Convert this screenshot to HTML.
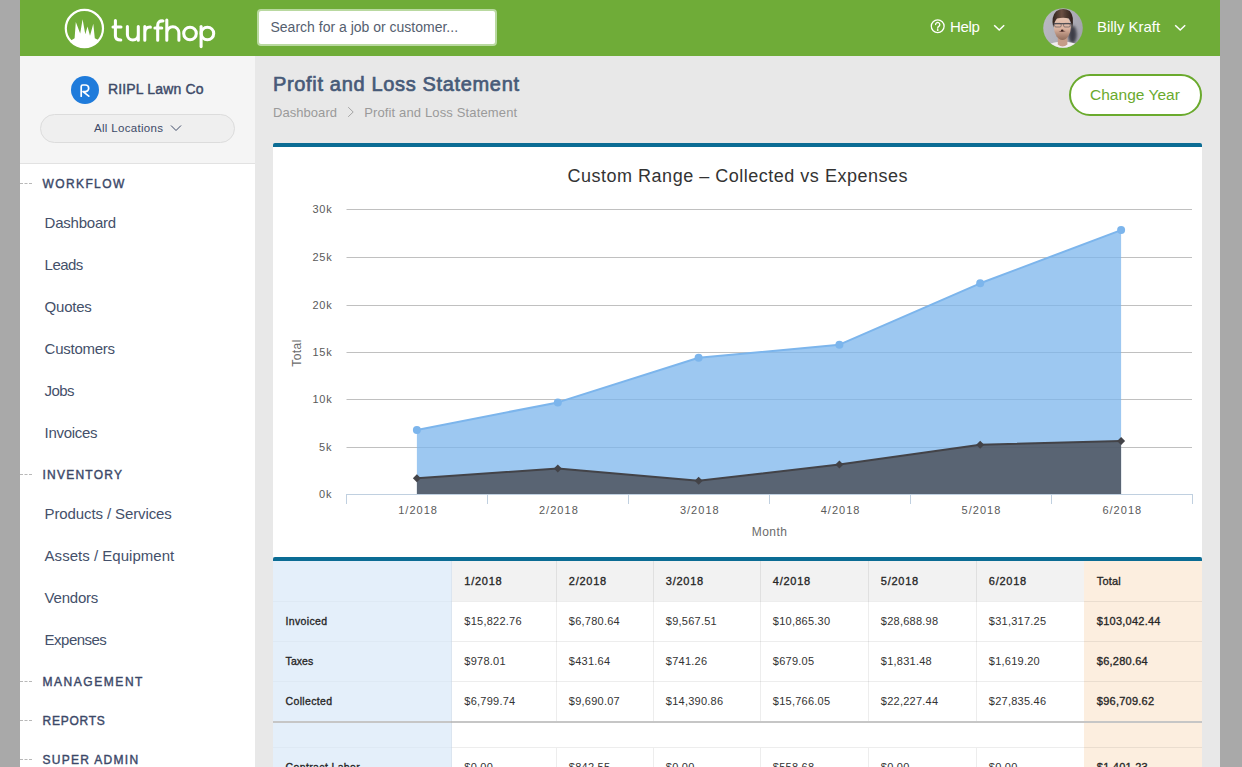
<!DOCTYPE html>
<html>
<head>
<meta charset="utf-8">
<title>Profit and Loss Statement</title>
<style>
*{box-sizing:border-box;margin:0;padding:0}
html,body{width:1242px;height:767px;overflow:hidden}
body{background:#a9a9a9;font-family:"Liberation Sans",sans-serif;position:relative}
.abs{position:absolute;white-space:nowrap;line-height:1}
#wrap{position:absolute;left:20px;top:0;width:1200px;height:767px;background:#e8e8e8;overflow:hidden}
/* header */
#hdr{position:absolute;left:0;top:0;width:1200px;height:56px;background:#6fac38}
#search{position:absolute;left:237px;top:9px;width:240px;height:37px;background:#fff;border:2px solid #b9d9a0;border-radius:4px}
#searchtx{left:250.5px;top:20px;font-size:14px;color:#55606f}
/* sidebar */
#side{position:absolute;left:0;top:56px;width:235px;height:711px;background:#fff}
#sidetop{position:absolute;left:0;top:0;width:235px;height:108px;background:#f5f5f5;border-bottom:1px solid #e2e2e2}
#loc{position:absolute;left:20px;top:58px;width:195px;height:28.5px;border:1px solid #dcdcdc;border-radius:15px;background:#efefef}
.sec{font-weight:normal;-webkit-text-stroke:.4px #3b4868;font-size:12px;letter-spacing:1.2px;color:#3b4868}
.nav{font-size:15px;color:#44506a}
.dash{position:absolute;left:0;width:12px;height:0;border-top:1px dashed #b8b8b8}
/* main */
#title{left:253px;top:74px;font-size:20px;font-weight:normal;-webkit-text-stroke:.68px #475a78;color:#475a78}
.bc{font-size:13px;color:#9a9a9a}
#btn{position:absolute;left:1049px;top:74px;width:133px;height:42px;border:2px solid #6aaa2d;border-radius:21px;background:#fff}
#btntx{left:1070px;top:87.4px;font-size:15.5px;color:#6aaa2d}
.panel{position:absolute;left:253px;width:929px;background:#fff;border-top:4px solid #0b6c94;border-radius:2px 2px 0 0}
.yl{font-size:11px;color:#5a5a5a;letter-spacing:.7px}
.xl{font-size:11px;color:#5a5a5a;letter-spacing:1px}
.th{font-size:11px;-webkit-text-stroke:.32px #262626;color:#262626}
.td{font-size:11px;color:#333;letter-spacing:.25px}
.tt{font-size:11px;-webkit-text-stroke:.32px #262626;color:#262626;letter-spacing:.25px}
#p1{top:143px;height:414px}
#p2{top:557px;height:210px}
</style>
<style id="fit">
#s1{letter-spacing:1.39px}
#s2{letter-spacing:1.24px}
#s3{letter-spacing:1.55px}
#s4{letter-spacing:0.75px}
#s5{letter-spacing:1.29px}
#n0{letter-spacing:-0.22px}
#n1{letter-spacing:-0.54px}
#n2{letter-spacing:-0.22px}
#n3{letter-spacing:-0.25px}
#n4{letter-spacing:-0.63px}
#n5{letter-spacing:-0.3px}
#n6{letter-spacing:-0.11px}
#n7{letter-spacing:0.02px}
#n8{letter-spacing:-0.22px}
#n9{letter-spacing:-0.52px}
#co{letter-spacing:0.15px}
#loctx{letter-spacing:0.31px}
#title{letter-spacing:0.66px}
#btntx{letter-spacing:0.02px}
#help{letter-spacing:-0.35px}
#uname{letter-spacing:-0.03px}
#ctitle{letter-spacing:0.51px}
#xs0{letter-spacing:1.03px}
#xs1{letter-spacing:1.03px}
#xs2{letter-spacing:1.03px}
#xs3{letter-spacing:1.03px}
#xs4{letter-spacing:1.03px}
#xs5{letter-spacing:1.03px}
#months{letter-spacing:0.51px}
#bc1{letter-spacing:0.05px}
#bc2{letter-spacing:0.14px}
#y0{letter-spacing:0.88px}
#y1{letter-spacing:0.88px}
#y2{letter-spacing:0.72px}
#y3{letter-spacing:0.72px}
#y4{letter-spacing:0.72px}
#y5{letter-spacing:0.72px}
#y6{letter-spacing:0.72px}
#h0{letter-spacing:0.73px}
#h1{letter-spacing:0.73px}
#h2{letter-spacing:0.73px}
#h3{letter-spacing:0.73px}
#h4{letter-spacing:0.73px}
#h5{letter-spacing:0.73px}
#h6{letter-spacing:0.16px}
#r0{letter-spacing:0.33px}
#r1{letter-spacing:0.04px}
#r2{letter-spacing:0.34px}
#r3{letter-spacing:0.36px}
</style>
</head>
<body>
<div id="wrap">
  <div id="hdr">
    <svg class="abs" style="left:0;top:0" width="240" height="56" viewBox="20 0 240 56">
      <defs><clipPath id="lc"><circle cx="84.4" cy="28.5" r="18.6"/></clipPath></defs>
      <g clip-path="url(#lc)" fill="#fff">
        <path d="M60 60V41.5L71.4 40.2L74.6 38.2L75.8 21.9L80.2 33.6L82.6 19.3L85.3 34.3L87.5 26.6L90 35.8L93.3 23.7L94.8 38.2L98.8 40.2L110 41.5V60Z"/>
      </g>
      <circle cx="84.4" cy="28.5" r="18.6" fill="none" stroke="#fff" stroke-width="2.2"/>
      <g fill="none" stroke="#fff" stroke-width="3.05" stroke-linecap="round" stroke-linejoin="round">
        <path d="M115.4 20.6V36Q115.4 40 120.8 40M113 27H121"/>
        <path d="M127.4 26.6V34.5A5.45 5.45 0 0 0 138.3 34.5V26.6M138.3 34V40.2"/>
        <path d="M144.8 26.6V40.2M144.8 32.5Q145 27 150.4 27.1"/>
        <path d="M157.7 40.2V25.2Q157.7 20.6 163 20.9M154.9 28H161.8"/>
        <path d="M166.8 20V40.2M166.8 32.8A6.05 6.05 0 0 1 178.9 32.8V40.2"/>
        <circle cx="190" cy="33.5" r="6.3"/>
        <path d="M201.1 26.6V46.6"/><circle cx="207.4" cy="33.5" r="6.3"/>
      </g>
    </svg>
    <div id="search"></div>
    <div class="abs" id="searchtx">Search for a job or customer...</div>
    <svg class="abs" style="left:909px;top:18px" width="18" height="18" viewBox="0 0 18 18"><circle cx="8.7" cy="8.3" r="6.4" fill="none" stroke="#fff" stroke-width="1.3"/><path d="M6.6 6.6a2.1 2.1 0 1 1 3.2 1.8c-.8.5-1.1.9-1.1 1.8" fill="none" stroke="#fff" stroke-width="1.3" stroke-linecap="round"/><circle cx="8.7" cy="12" r=".9" fill="#fff"/></svg>
    <div class="abs" id="help" style="left:930px;top:19.2px;font-size:15px;color:#fff">Help</div>
    <svg class="abs" style="left:973px;top:24px" width="12" height="8" viewBox="0 0 12 8"><path d="M1.2 1.2l5 4.8 5-4.8" fill="none" stroke="#fff" stroke-width="1.5"/></svg>
    <svg class="abs" style="left:1023px;top:8.3px" width="40" height="40" viewBox="0 0 40 40">
      <defs><clipPath id="av"><circle cx="20" cy="20" r="19.8"/></clipPath>
      <filter id="avb" x="-10%" y="-10%" width="120%" height="120%"><feGaussianBlur stdDeviation="0.6"/></filter>
      <filter id="avs" x="-50%" y="-50%" width="200%" height="200%"><feGaussianBlur stdDeviation="1.5"/></filter>
      <linearGradient id="avbg" x1="0" x2="1" y1="0" y2="0.3"><stop offset="0" stop-color="#bbbbc3"/><stop offset="0.55" stop-color="#b1b1ba"/><stop offset="1" stop-color="#a3a3ad"/></linearGradient>
      <linearGradient id="avf" x1="0" x2="0" y1="0" y2="1"><stop offset="0" stop-color="#e8c8b6"/><stop offset="0.55" stop-color="#dcb4a0"/><stop offset="0.78" stop-color="#b48d7a"/><stop offset="1" stop-color="#8f6b5b"/></linearGradient>
      <linearGradient id="avh" x1="0" x2="1" y1="0" y2="0"><stop offset="0" stop-color="#2e211c"/><stop offset="0.45" stop-color="#6b4f42"/><stop offset="0.7" stop-color="#4a362e"/><stop offset="1" stop-color="#2a1e1a"/></linearGradient></defs>
      <g clip-path="url(#av)">
        <rect x="-3" y="-3" width="46" height="46" fill="url(#avbg)"/>
        <ellipse cx="29.5" cy="26.5" rx="4.2" ry="9" fill="#3c3c46" filter="url(#avs)"/>
        <g filter="url(#avb)">
        <path d="M-2 44L4 38Q8 34.4 14.5 34L24.5 34Q32 34.6 36 38L42 44Z" fill="#f1eeee"/>
        <path d="M14.8 28h9.6v8.5q-4.8 4-9.6 0Z" fill="#c59c88"/>
        <ellipse cx="19.4" cy="19.4" rx="8.4" ry="12.6" fill="url(#avf)"/>
        <path d="M15.6 23.3Q19.2 24.7 22.8 23.1Q19.4 22.1 15.6 23.3Z" fill="#6a4640"/>
        <ellipse cx="19.2" cy="22.3" rx="1.3" ry=".9" fill="#3c2724"/>
        <path d="M10.2 19.5Q7.8 8.5 13.2 3.2Q20 -1.2 26.8 3Q31.8 8.5 29 20.5Q28.4 14 25.8 10.6Q20.5 8.8 14 10.6Q11.4 13.5 10.2 19.5Z" fill="url(#avh)"/>
        <g fill="none" stroke="#4b4b53"><path d="M10.6 15.7H28.2" stroke-width="1.15" stroke="#44444c"/><rect x="11.6" y="15.4" width="6.6" height="3.6" rx="1.3" stroke-width=".6"/><rect x="20.6" y="15.4" width="6.6" height="3.6" rx="1.3" stroke-width=".6"/></g>
        </g>
      </g>
    </svg>
    <div class="abs" id="uname" style="left:1077px;top:18.9px;font-size:15px;color:#fff">Billy Kraft</div>
    <svg class="abs" style="left:1154px;top:24px" width="12" height="8" viewBox="0 0 12 8"><path d="M1.2 1.2l5 4.8 5-4.8" fill="none" stroke="#fff" stroke-width="1.5"/></svg>
  </div>
  <div id="side">
    <div id="sidetop"><div id="loc"></div></div>
    <div style="position:absolute;left:51px;top:20px;width:28px;height:28px;border-radius:14px;background:#1f7bdb"></div>
    <svg class="abs" style="left:51px;top:20px" width="28" height="28" viewBox="0 0 28 28"><path d="M10.2 20.2V10.6a1.6 1.6 0 0 1 1.6-1.6h2.6a3.3 3.3 0 0 1 0 6.6h-2.4l5.8 4.6" fill="none" stroke="#fff" stroke-width="1.7" stroke-linecap="round" stroke-linejoin="round"/></svg>
    <div class="abs" id="co" style="left:88px;top:26.2px;font-size:14px;-webkit-text-stroke:.42px #3d4a68;color:#3d4a68">RIIPL Lawn Co</div>
    <div class="abs" id="loctx" style="left:74px;top:67px;font-size:11.5px;color:#3d4a68">All Locations</div>
    <svg class="abs" style="left:150px;top:68px" width="12" height="8" viewBox="0 0 12 8"><path d="M1 1.5l5 5 5-5" fill="none" stroke="#3d4a68" stroke-width="1"/></svg>
    <div class="dash" style="top:127.2px"></div>
    <div class="abs sec" id="s1" style="left:22.5px;top:121.6px">WORKFLOW</div>
    <div class="dash" style="top:418.2px"></div>
    <div class="abs sec" id="s2" style="left:22.5px;top:412.6px">INVENTORY</div>
    <div class="dash" style="top:625.2px"></div>
    <div class="abs sec" id="s3" style="left:22.5px;top:619.6px">MANAGEMENT</div>
    <div class="dash" style="top:664.2px"></div>
    <div class="abs sec" id="s4" style="left:22.5px;top:658.6px">REPORTS</div>
    <div class="dash" style="top:703.2px"></div>
    <div class="abs sec" id="s5" style="left:22.5px;top:697.6px">SUPER ADMIN</div>
    <div class="abs nav" id="n0" style="left:24.6px;top:159.3px">Dashboard</div>
    <div class="abs nav" id="n1" style="left:24.6px;top:201.3px">Leads</div>
    <div class="abs nav" id="n2" style="left:24.6px;top:243.3px">Quotes</div>
    <div class="abs nav" id="n3" style="left:24.6px;top:285.3px">Customers</div>
    <div class="abs nav" id="n4" style="left:24.6px;top:327.3px">Jobs</div>
    <div class="abs nav" id="n5" style="left:24.6px;top:369.3px">Invoices</div>
    <div class="abs nav" id="n6" style="left:24.6px;top:450.3px">Products / Services</div>
    <div class="abs nav" id="n7" style="left:24.6px;top:492.3px">Assets / Equipment</div>
    <div class="abs nav" id="n8" style="left:24.6px;top:534.3px">Vendors</div>
    <div class="abs nav" id="n9" style="left:24.6px;top:576.3px">Expenses</div>
  </div>
  <div class="abs" id="title">Profit and Loss Statement</div>
  <div class="abs bc" id="bc1" style="left:253px;top:106.0px">Dashboard</div>
  <svg class="abs" style="left:326px;top:106px" width="10" height="12" viewBox="0 0 10 12"><path d="M2.2 1.2l5 4.8-5 4.8" fill="none" stroke="#a5a5a5" stroke-width="1"/></svg>
  <div class="abs bc" id="bc2" style="left:344.2px;top:106.0px">Profit and Loss Statement</div>
  <div id="btn"></div>
  <div class="abs" id="btntx">Change Year</div>
  <div class="panel" id="p1"></div>
  <div class="panel" id="p2"></div>
  <!--CHART-->
  <svg class="abs" style="left:0;top:0" width="1200" height="767" viewBox="20 0 1200 767">
<path d="M346.5 447.5H1192" stroke="#c0c0c0" stroke-width="1"/>
<path d="M346.5 399.5H1192" stroke="#c0c0c0" stroke-width="1"/>
<path d="M346.5 352.5H1192" stroke="#c0c0c0" stroke-width="1"/>
<path d="M346.5 305.5H1192" stroke="#c0c0c0" stroke-width="1"/>
<path d="M346.5 257.5H1192" stroke="#c0c0c0" stroke-width="1"/>
<path d="M346.5 209.5H1192" stroke="#c0c0c0" stroke-width="1"/>
<path d="M416.9 494.5 L416.9 429.9 L557.8 402.4 L698.6 357.8 L839.4 344.7 L980.2 283.3 L1121.1 230.1 L1121.1 494.5Z" fill="#7cb5ec" fill-opacity="0.75"/>
<path d="M416.9 429.9 L557.8 402.4 L698.6 357.8 L839.4 344.7 L980.2 283.3 L1121.1 230.1" fill="none" stroke="#7cb5ec" stroke-width="2" stroke-linejoin="round" stroke-linecap="round"/>
<circle cx="416.9" cy="429.9" r="4" fill="#7cb5ec"/>
<circle cx="557.8" cy="402.4" r="4" fill="#7cb5ec"/>
<circle cx="698.6" cy="357.8" r="4" fill="#7cb5ec"/>
<circle cx="839.4" cy="344.7" r="4" fill="#7cb5ec"/>
<circle cx="980.2" cy="283.3" r="4" fill="#7cb5ec"/>
<circle cx="1121.1" cy="230.1" r="4" fill="#7cb5ec"/>
<path d="M416.9 494.5 L416.9 478.2 L557.8 468.6 L698.6 480.7 L839.4 464.5 L980.2 444.7 L1121.1 441.1 L1121.1 494.5Z" fill="#434348" fill-opacity="0.75"/>
<path d="M416.9 478.2 L557.8 468.6 L698.6 480.7 L839.4 464.5 L980.2 444.7 L1121.1 441.1" fill="none" stroke="#434348" stroke-width="2" stroke-linejoin="round" stroke-linecap="round"/>
<path d="M416.9 474.2l4 4-4 4-4-4Z" fill="#434348"/>
<path d="M557.8 464.6l4 4-4 4-4-4Z" fill="#434348"/>
<path d="M698.6 476.7l4 4-4 4-4-4Z" fill="#434348"/>
<path d="M839.4 460.5l4 4-4 4-4-4Z" fill="#434348"/>
<path d="M980.2 440.7l4 4-4 4-4-4Z" fill="#434348"/>
<path d="M1121.1 437.1l4 4-4 4-4-4Z" fill="#434348"/>
<path d="M346 494.5H1193" stroke="#c0d0e0" stroke-width="1"/>
<path d="M346.5 494.5V504.0" stroke="#c0d0e0" stroke-width="1"/>
<path d="M487.5 494.5V504.0" stroke="#c0d0e0" stroke-width="1"/>
<path d="M628.5 494.5V504.0" stroke="#c0d0e0" stroke-width="1"/>
<path d="M769.5 494.5V504.0" stroke="#c0d0e0" stroke-width="1"/>
<path d="M910.5 494.5V504.0" stroke="#c0d0e0" stroke-width="1"/>
<path d="M1051.5 494.5V504.0" stroke="#c0d0e0" stroke-width="1"/>
<path d="M1192.5 494.5V504.0" stroke="#c0d0e0" stroke-width="1"/>
</svg>
  <div class="abs" id="ctitle" style="left:547.5px;top:166.8px;font-size:18px;color:#333">Custom Range &#8211; Collected vs Expenses</div>
  <div class="abs yl" id="y0" style="right:887.6px;top:488.8px">0k</div>
  <div class="abs yl" id="y1" style="right:887.6px;top:441.8px">5k</div>
  <div class="abs yl" id="y2" style="right:887.6px;top:393.8px">10k</div>
  <div class="abs yl" id="y3" style="right:887.6px;top:346.8px">15k</div>
  <div class="abs yl" id="y4" style="right:887.6px;top:299.8px">20k</div>
  <div class="abs yl" id="y5" style="right:887.6px;top:251.8px">25k</div>
  <div class="abs yl" id="y6" style="right:887.6px;top:203.8px">30k</div>
  <div class="abs xl" id="x0" style="left:358.1px;width:80px;text-align:center;top:504.6px"><span id="xs0">1/2018</span></div>
  <div class="abs xl" id="x1" style="left:498.9px;width:80px;text-align:center;top:504.6px"><span id="xs1">2/2018</span></div>
  <div class="abs xl" id="x2" style="left:639.8px;width:80px;text-align:center;top:504.6px"><span id="xs2">3/2018</span></div>
  <div class="abs xl" id="x3" style="left:780.6px;width:80px;text-align:center;top:504.6px"><span id="xs3">4/2018</span></div>
  <div class="abs xl" id="x4" style="left:921.5px;width:80px;text-align:center;top:504.6px"><span id="xs4">5/2018</span></div>
  <div class="abs xl" id="x5" style="left:1062.3px;width:80px;text-align:center;top:504.6px"><span id="xs5">6/2018</span></div>
  <div class="abs xl" id="month" style="left:709.6px;width:80px;text-align:center;top:525.7px;font-size:12px;color:#6b6b6b"><span id="months">Month</span></div>
  <div class="abs xl" id="total" style="left:237px;width:80px;text-align:center;top:346.6px;font-size:12px;color:#6b6b6b;transform:rotate(-90deg);transform-origin:50% 50%"><span style="letter-spacing:.43px">Total</span></div>
  <!--/CHART-->
  <!--TABLE-->
  <div style="position:absolute;left:253px;top:561px;width:179px;height:206px;background:#e4effa"></div>
  <div style="position:absolute;left:432px;top:561px;width:632px;height:40px;background:#f2f2f2"></div>
  <div style="position:absolute;left:1064px;top:561px;width:118px;height:206px;background:#fceedf"></div>
  <div style="position:absolute;left:253px;top:601px;width:179px;height:1px;background:rgba(0,0,0,.025)"></div>
  <div style="position:absolute;left:432px;top:601px;width:750px;height:1px;background:rgba(0,0,0,.07)"></div>
  <div style="position:absolute;left:253px;top:641px;width:179px;height:1px;background:rgba(0,0,0,.025)"></div>
  <div style="position:absolute;left:432px;top:641px;width:750px;height:1px;background:rgba(0,0,0,.07)"></div>
  <div style="position:absolute;left:253px;top:681px;width:179px;height:1px;background:rgba(0,0,0,.025)"></div>
  <div style="position:absolute;left:432px;top:681px;width:750px;height:1px;background:rgba(0,0,0,.07)"></div>
  <div style="position:absolute;left:253px;top:747px;width:179px;height:1px;background:rgba(0,0,0,.025)"></div>
  <div style="position:absolute;left:432px;top:747px;width:750px;height:1px;background:rgba(0,0,0,.07)"></div>
  <div style="position:absolute;left:253px;top:721px;width:929px;height:2px;background:#c6c6c6"></div>
  <div style="position:absolute;left:536px;top:561px;width:1px;height:160px;background:rgba(0,0,0,.07)"></div>
  <div style="position:absolute;left:536px;top:748px;width:1px;height:19px;background:rgba(0,0,0,.07)"></div>
  <div style="position:absolute;left:633px;top:561px;width:1px;height:160px;background:rgba(0,0,0,.07)"></div>
  <div style="position:absolute;left:633px;top:748px;width:1px;height:19px;background:rgba(0,0,0,.07)"></div>
  <div style="position:absolute;left:740px;top:561px;width:1px;height:160px;background:rgba(0,0,0,.07)"></div>
  <div style="position:absolute;left:740px;top:748px;width:1px;height:19px;background:rgba(0,0,0,.07)"></div>
  <div style="position:absolute;left:848px;top:561px;width:1px;height:160px;background:rgba(0,0,0,.07)"></div>
  <div style="position:absolute;left:848px;top:748px;width:1px;height:19px;background:rgba(0,0,0,.07)"></div>
  <div style="position:absolute;left:956px;top:561px;width:1px;height:160px;background:rgba(0,0,0,.07)"></div>
  <div style="position:absolute;left:956px;top:748px;width:1px;height:19px;background:rgba(0,0,0,.07)"></div>
  <div style="position:absolute;left:431px;top:561px;width:1px;height:206px;background:rgba(0,0,0,.04)"></div>
  <div class="abs th" id="h0" style="left:444.3px;top:575.8px">1/2018</div>
  <div class="abs th" id="h1" style="left:548.8px;top:575.8px">2/2018</div>
  <div class="abs th" id="h2" style="left:645.8px;top:575.8px">3/2018</div>
  <div class="abs th" id="h3" style="left:752.8px;top:575.8px">4/2018</div>
  <div class="abs th" id="h4" style="left:860.8px;top:575.8px">5/2018</div>
  <div class="abs th" id="h5" style="left:968.8px;top:575.8px">6/2018</div>
  <div class="abs th" id="h6" style="left:1076.8px;top:575.8px">Total</div>
  <div class="abs th" id="r0" style="left:265.6px;top:616.1px;font-size:10.5px">Invoiced</div>
  <div class="abs td" style="left:444.3px;top:615.7px">$15,822.76</div>
  <div class="abs td" style="left:548.8px;top:615.7px">$6,780.64</div>
  <div class="abs td" style="left:645.8px;top:615.7px">$9,567.51</div>
  <div class="abs td" style="left:752.8px;top:615.7px">$10,865.30</div>
  <div class="abs td" style="left:860.8px;top:615.7px">$28,688.98</div>
  <div class="abs td" style="left:968.8px;top:615.7px">$31,317.25</div>
  <div class="abs tt" style="left:1076.8px;top:615.7px">$103,042.44</div>
  <div class="abs th" id="r1" style="left:265.6px;top:656.1px;font-size:10.5px">Taxes</div>
  <div class="abs td" style="left:444.3px;top:655.7px">$978.01</div>
  <div class="abs td" style="left:548.8px;top:655.7px">$431.64</div>
  <div class="abs td" style="left:645.8px;top:655.7px">$741.26</div>
  <div class="abs td" style="left:752.8px;top:655.7px">$679.05</div>
  <div class="abs td" style="left:860.8px;top:655.7px">$1,831.48</div>
  <div class="abs td" style="left:968.8px;top:655.7px">$1,619.20</div>
  <div class="abs tt" style="left:1076.8px;top:655.7px">$6,280.64</div>
  <div class="abs th" id="r2" style="left:265.6px;top:696.1px;font-size:10.5px">Collected</div>
  <div class="abs td" style="left:444.3px;top:695.7px">$6,799.74</div>
  <div class="abs td" style="left:548.8px;top:695.7px">$9,690.07</div>
  <div class="abs td" style="left:645.8px;top:695.7px">$14,390.86</div>
  <div class="abs td" style="left:752.8px;top:695.7px">$15,766.05</div>
  <div class="abs td" style="left:860.8px;top:695.7px">$22,227.44</div>
  <div class="abs td" style="left:968.8px;top:695.7px">$27,835.46</div>
  <div class="abs tt" style="left:1076.8px;top:695.7px">$96,709.62</div>
  <div class="abs th" id="r3" style="left:265.6px;top:762.1px;font-size:10.5px">Contract Labor</div>
  <div class="abs td" style="left:444.3px;top:761.7px">$0.00</div>
  <div class="abs td" style="left:548.8px;top:761.7px">$842.55</div>
  <div class="abs td" style="left:645.8px;top:761.7px">$0.00</div>
  <div class="abs td" style="left:752.8px;top:761.7px">$558.68</div>
  <div class="abs td" style="left:860.8px;top:761.7px">$0.00</div>
  <div class="abs td" style="left:968.8px;top:761.7px">$0.00</div>
  <div class="abs tt" style="left:1076.8px;top:761.7px">$1,401.23</div>
  <!--/TABLE-->
</div>
</body>
</html>
